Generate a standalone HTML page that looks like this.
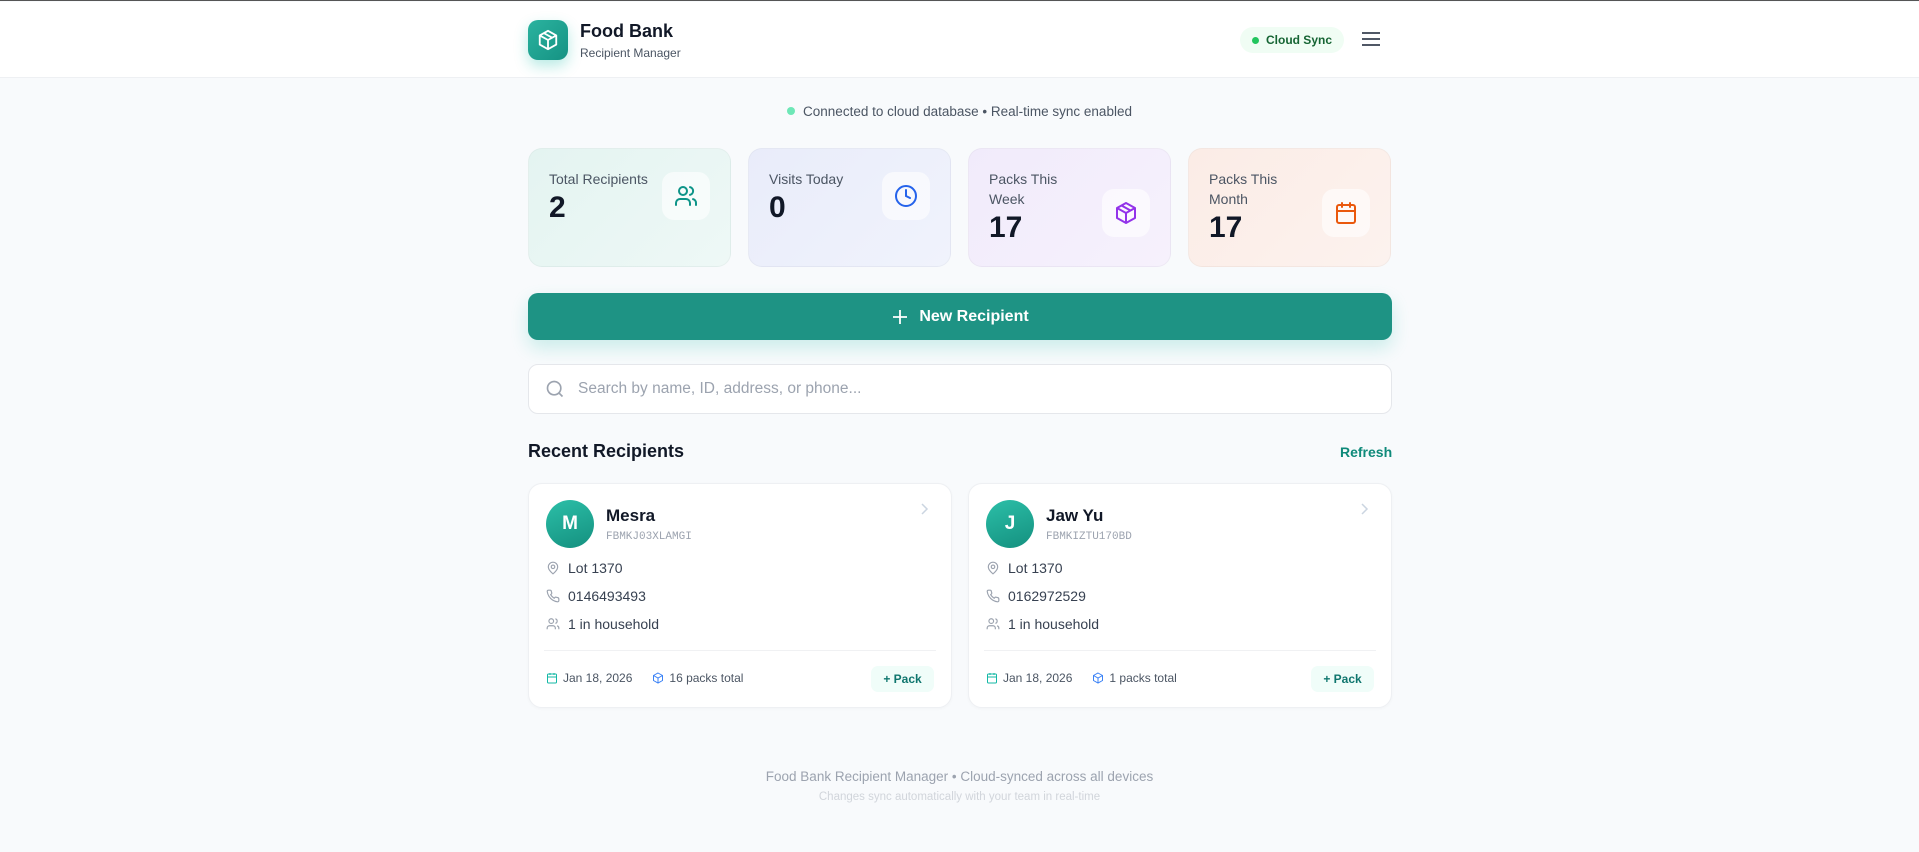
<!DOCTYPE html>
<html><head><meta charset="utf-8"><style>
*{box-sizing:border-box;margin:0;padding:0}
body{width:1919px;height:852px;overflow:hidden;background:#f8fafc;font-family:"Liberation Sans",sans-serif;color:#111827;position:relative;border-top:1px solid #555}
.abs{position:absolute}
header{position:absolute;left:0;top:1px;width:1919px;height:76px;background:#fff;border-bottom:1px solid #eef0f3}
.logo{left:528px;top:18px;width:40px;height:40px;border-radius:10px;background:linear-gradient(135deg,#2bb39f,#159283);box-shadow:0 6px 14px rgba(20,184,166,.3);display:flex;align-items:center;justify-content:center}
.card{position:absolute;border-radius:14px}
.stat{top:147px;width:203px;height:119px;border:1px solid rgba(0,0,0,.03)}
.stat .l{position:absolute;left:20px;top:20px;font-size:14px;color:#4b5563;line-height:20px;width:100px}
.stat .n{position:absolute;left:20px;font-size:30px;font-weight:bold;color:#111827}
.stat .ic{position:absolute;right:20px;width:48px;height:48px;border-radius:12px;background:rgba(255,255,255,.6);display:flex;align-items:center;justify-content:center}
.rc{top:482px;width:424px;height:225px;background:#fff;border:1px solid #eef0f3;box-shadow:0 1px 3px rgba(0,0,0,.03)}
.av{position:absolute;left:17px;top:16px;width:48px;height:48px;border-radius:50%;background:linear-gradient(160deg,#2cbfa8,#14907f);color:#fff;font-weight:bold;font-size:19px;display:flex;align-items:center;justify-content:center}
.nm{position:absolute;left:77px;top:22px;font-size:17px;font-weight:bold}
.id{position:absolute;left:77px;top:47px;font-family:"Liberation Mono",monospace;font-size:11px;color:#9ca3af}
.row{position:absolute;left:17px;font-size:14px;color:#374151;display:flex;align-items:center;gap:8px}
.dv{position:absolute;left:15px;right:15px;top:166px;border-top:1px solid #f0f1f3}
.ft{position:absolute;left:17px;top:187px;font-size:12px;color:#4b5563;display:flex;align-items:center;gap:5px}
.pk{position:absolute;right:17px;top:182px;width:63px;height:26px;border-radius:7px;background:#f0fdf9;color:#0f766e;font-size:12px;font-weight:bold;display:flex;align-items:center;justify-content:center}
.chev{position:absolute;right:22px;top:18px}
</style></head><body>
<header>
<div class="abs logo"><svg width="22" height="22" viewBox="0 0 24 24" fill="none" stroke="#fff" stroke-width="2" stroke-linejoin="round"><path d="M12 2l9 5v10l-9 5-9-5V7z"/><path d="M3 7l9 5 9-5M12 12v10M7.5 4.5l9 5"/></svg></div>
<div class="abs" style="left:580px;top:19px;font-size:18px;font-weight:bold">Food Bank</div>
<div class="abs" style="left:580px;top:44px;font-size:12px;color:#4b5563">Recipient Manager</div>
<div class="abs" style="left:1240px;top:25px;width:104px;height:26px;border-radius:13px;background:#f0fdf4;display:flex;align-items:center;justify-content:center;gap:7px;font-size:12px;font-weight:bold;color:#166534"><span style="width:7px;height:7px;border-radius:50%;background:#22c55e"></span>Cloud Sync</div>
<svg class="abs" style="left:1361px;top:28px" width="20" height="18" viewBox="0 0 20 18" stroke="#374151" stroke-width="1.8"><path d="M1 3h18M1 9h18M1 15h18"/></svg>
</header>
<div class="abs" style="left:0;width:1919px;top:103px;text-align:center;font-size:13.5px;color:#4b5563"><span style="display:inline-block;width:8px;height:8px;border-radius:50%;background:#6ee7b7;margin-right:8px;vertical-align:1px"></span>Connected to cloud database • Real-time sync enabled</div>

<div class="card stat" style="left:528px;background:linear-gradient(135deg,#e4f4f1,#eef8f6)"><div class="l" style="width:130px">Total Recipients</div><div class="n" style="top:42px">2</div><div class="ic" style="top:23px"><svg width="24" height="24" viewBox="0 0 24 24" fill="none" stroke="#0d9488" stroke-width="2" stroke-linecap="round"><circle cx="9" cy="7" r="4"/><path d="M2 21v-2a4 4 0 014-4h6a4 4 0 014 4v2M16 3.1a4 4 0 010 7.8M22 21v-2a4 4 0 00-3-3.9"/></svg></div></div>
<div class="card stat" style="left:748px;background:linear-gradient(135deg,#e9ecfa,#f0f3fc)"><div class="l">Visits Today</div><div class="n" style="top:42px">0</div><div class="ic" style="top:23px"><svg width="24" height="24" viewBox="0 0 24 24" fill="none" stroke="#2563eb" stroke-width="2" stroke-linecap="round"><circle cx="12" cy="12" r="10"/><path d="M12 6v6l4 2"/></svg></div></div>
<div class="card stat" style="left:968px;background:linear-gradient(135deg,#f1ebfb,#f6f1fc)"><div class="l">Packs This Week</div><div class="n" style="top:62px">17</div><div class="ic" style="top:40px"><svg width="24" height="24" viewBox="0 0 24 24" fill="none" stroke="#9333ea" stroke-width="2" stroke-linejoin="round"><path d="M12 2l9 5v10l-9 5-9-5V7z"/><path d="M3 7l9 5 9-5M12 12v10M7.5 4.5l9 5"/></svg></div></div>
<div class="card stat" style="left:1188px;background:linear-gradient(135deg,#fbece6,#fcf2ee)"><div class="l">Packs This Month</div><div class="n" style="top:62px">17</div><div class="ic" style="top:40px"><svg width="24" height="24" viewBox="0 0 24 24" fill="none" stroke="#ea580c" stroke-width="2" stroke-linecap="round"><rect x="3" y="4" width="18" height="18" rx="2"/><path d="M16 2v4M8 2v4M3 10h18"/></svg></div></div>

<div class="abs" style="left:528px;top:292px;width:864px;height:47px;border-radius:10px;background:#1e9384;box-shadow:0 8px 18px rgba(20,184,166,.2);display:flex;align-items:center;justify-content:center;gap:10px;color:#fff;font-size:16px;font-weight:bold"><svg width="18" height="18" viewBox="0 0 18 18" stroke="#fff" stroke-width="1.8"><path d="M9 2v14M2 9h14"/></svg>New Recipient</div>

<div class="abs" style="left:528px;top:363px;width:864px;height:50px;border-radius:10px;background:#fff;border:1px solid #e5e7eb;display:flex;align-items:center"><svg style="margin-left:16px" width="20" height="20" viewBox="0 0 24 24" fill="none" stroke="#9ca3af" stroke-width="2"><circle cx="11" cy="11" r="8"/><path d="M21 21l-4.3-4.3"/></svg><span style="margin-left:13px;font-size:15.5px;color:#9ca3af">Search by name, ID, address, or phone...</span></div>

<div class="abs" style="left:528px;top:440px;font-size:18px;font-weight:bold">Recent Recipients</div>
<div class="abs" style="left:1340px;top:443px;font-size:14px;font-weight:bold;color:#0f8a7a">Refresh</div>

<div class="card rc" style="left:528px">
<div class="av">M</div><div class="nm">Mesra</div><div class="id">FBMKJ03XLAMGI</div>
<svg class="chev" width="10" height="14" viewBox="0 0 10 14" fill="none" stroke="#cbd5e1" stroke-width="1.5"><path d="M3 2l5 5-5 5"/></svg>
<div class="row" style="top:76px"><svg width="14" height="14" viewBox="0 0 24 24" fill="none" stroke="#9ca3af" stroke-width="2"><path d="M20 10c0 6-8 12-8 12S4 16 4 10a8 8 0 0116 0z"/><circle cx="12" cy="10" r="3"/></svg>Lot 1370</div>
<div class="row" style="top:104px"><svg width="14" height="14" viewBox="0 0 24 24" fill="none" stroke="#9ca3af" stroke-width="2"><path d="M22 16.9v3a2 2 0 01-2.2 2 19.8 19.8 0 01-8.6-3.1 19.5 19.5 0 01-6-6A19.8 19.8 0 012.1 4.2 2 2 0 014.1 2h3a2 2 0 012 1.7c.1.9.4 1.8.7 2.7a2 2 0 01-.5 2.1L8 9.8a16 16 0 006 6l1.3-1.3a2 2 0 012.1-.4c.9.3 1.8.6 2.7.7a2 2 0 011.7 2z"/></svg>0146493493</div>
<div class="row" style="top:132px"><svg width="14" height="14" viewBox="0 0 24 24" fill="none" stroke="#9ca3af" stroke-width="2"><circle cx="9" cy="7" r="4"/><path d="M2 21v-2a4 4 0 014-4h6a4 4 0 014 4v2M16 3.1a4 4 0 010 7.8M22 21v-2a4 4 0 00-3-3.9"/></svg>1 in household</div>
<div class="dv"></div>
<div class="ft"><svg width="12" height="12" viewBox="0 0 24 24" fill="none" stroke="#14b8a6" stroke-width="2"><rect x="3" y="4" width="18" height="18" rx="2"/><path d="M16 2v4M8 2v4M3 10h18"/></svg>Jan 18, 2026<span style="width:10px"></span><svg width="12" height="12" viewBox="0 0 24 24" fill="none" stroke="#3b82f6" stroke-width="2"><path d="M12 2l9 5v10l-9 5-9-5V7z"/><path d="M3 7l9 5 9-5M12 12v10"/></svg>16 packs total</div>
<div class="pk">+ Pack</div>
</div>

<div class="card rc" style="left:968px">
<div class="av">J</div><div class="nm">Jaw Yu</div><div class="id">FBMKIZTU170BD</div>
<svg class="chev" width="10" height="14" viewBox="0 0 10 14" fill="none" stroke="#cbd5e1" stroke-width="1.5"><path d="M3 2l5 5-5 5"/></svg>
<div class="row" style="top:76px"><svg width="14" height="14" viewBox="0 0 24 24" fill="none" stroke="#9ca3af" stroke-width="2"><path d="M20 10c0 6-8 12-8 12S4 16 4 10a8 8 0 0116 0z"/><circle cx="12" cy="10" r="3"/></svg>Lot 1370</div>
<div class="row" style="top:104px"><svg width="14" height="14" viewBox="0 0 24 24" fill="none" stroke="#9ca3af" stroke-width="2"><path d="M22 16.9v3a2 2 0 01-2.2 2 19.8 19.8 0 01-8.6-3.1 19.5 19.5 0 01-6-6A19.8 19.8 0 012.1 4.2 2 2 0 014.1 2h3a2 2 0 012 1.7c.1.9.4 1.8.7 2.7a2 2 0 01-.5 2.1L8 9.8a16 16 0 006 6l1.3-1.3a2 2 0 012.1-.4c.9.3 1.8.6 2.7.7a2 2 0 011.7 2z"/></svg>0162972529</div>
<div class="row" style="top:132px"><svg width="14" height="14" viewBox="0 0 24 24" fill="none" stroke="#9ca3af" stroke-width="2"><circle cx="9" cy="7" r="4"/><path d="M2 21v-2a4 4 0 014-4h6a4 4 0 014 4v2M16 3.1a4 4 0 010 7.8M22 21v-2a4 4 0 00-3-3.9"/></svg>1 in household</div>
<div class="dv"></div>
<div class="ft"><svg width="12" height="12" viewBox="0 0 24 24" fill="none" stroke="#14b8a6" stroke-width="2"><rect x="3" y="4" width="18" height="18" rx="2"/><path d="M16 2v4M8 2v4M3 10h18"/></svg>Jan 18, 2026<span style="width:10px"></span><svg width="12" height="12" viewBox="0 0 24 24" fill="none" stroke="#3b82f6" stroke-width="2"><path d="M12 2l9 5v10l-9 5-9-5V7z"/><path d="M3 7l9 5 9-5M12 12v10"/></svg>1 packs total</div>
<div class="pk">+ Pack</div>
</div>

<div class="abs" style="left:0;width:1919px;top:768px;text-align:center;font-size:13.5px;color:#9ca3af">Food Bank Recipient Manager • Cloud-synced across all devices</div>
<div class="abs" style="left:0;width:1919px;top:790px;text-align:center;font-size:11.5px;color:#d1d5db">Changes sync automatically with your team in real-time</div>
</body></html>
